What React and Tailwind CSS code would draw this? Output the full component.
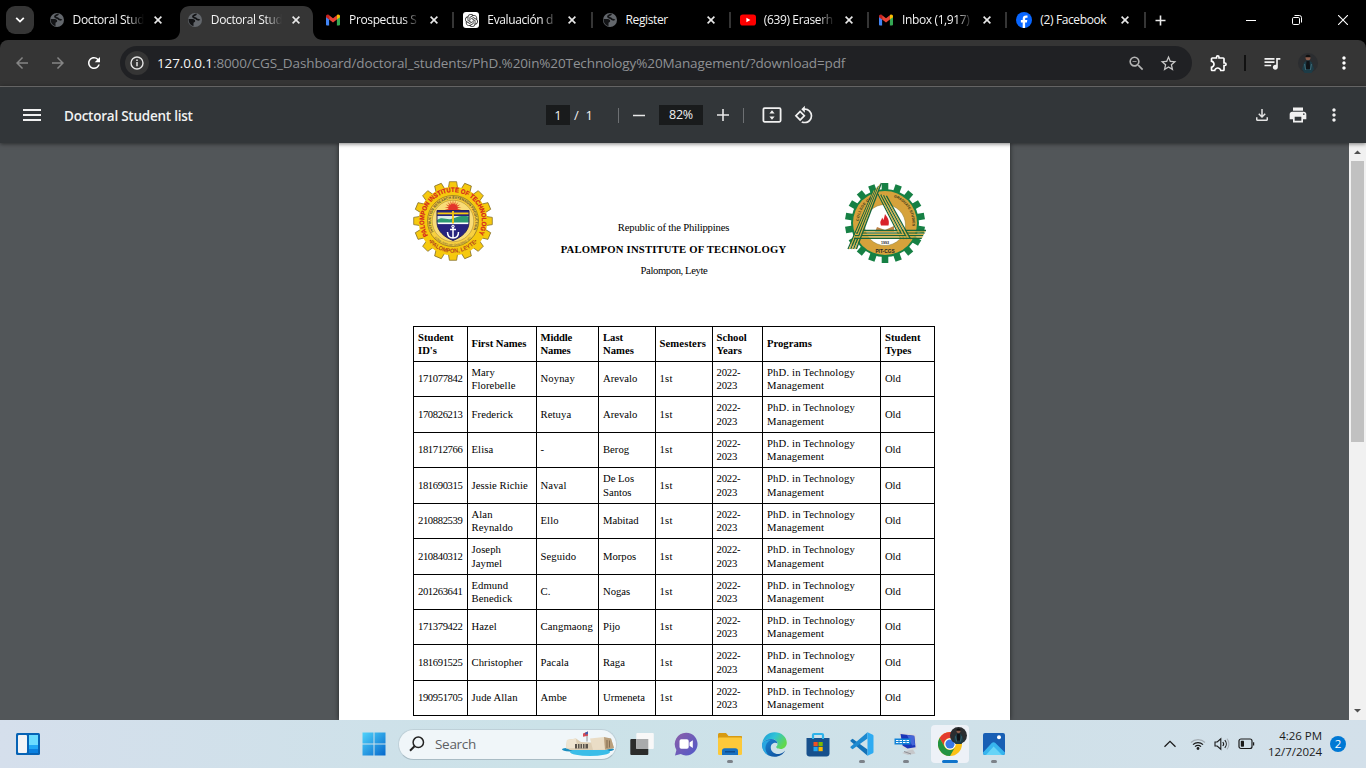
import React from "react";
import {
  MdRefresh,
  MdArrowBack,
  MdArrowForward,
  MdStarBorder,
  MdOutlineZoomOut,
  MdOutlineExtension,
  MdQueueMusic,
  MdMoreVert,
  MdOutlineFileDownload,
  MdPrint,
  MdRotate90DegreesCcw,
  MdMenu,
} from "react-icons/md";
import { SiOpenai } from "react-icons/si";

/* ---------- tab icons ---------- */

function Globe() {
  return (
    <svg width="16" height="16" viewBox="0 0 16 16">
      <circle cx="8" cy="8" r="7" fill="#63676c" />
      <path d="M9 1.800C9 3.200 6.200 3 6 4.500 5.800 6 9 5.700 9.500 7c.3.900 2.700.3 3 1.300" fill="none" stroke="#131416" strokeWidth="1.900" />
      <path d="M1.600 7h4c1.800 0 2.600 1 2.600 2.200 0 1-1.700.8-1.700 2V14C3.500 13.600 1.500 10.500 1.600 7z" fill="#131416" />
    </svg>
  );
}

function Gmail() {
  return (
    <svg width="16" height="16" viewBox="0 0 16 16">
      <path d="M1 4v8.600c0 .5.4.9.9.9h2.200V7z" fill="#4285f4" />
      <path d="M15 4v8.600c0 .5-.4.9-.9.9h-2.200V7z" fill="#34a853" />
      <path d="M4.100 3.300 8 6.300l3.900-3v4.200L8 10.500 4.100 7.500z" fill="#ea4335" />
      <path d="M1 4.300C1 2.800 2.700 2 3.900 3l.2.200v4.300L1 5.200z" fill="#c5221f" />
      <path d="M15 4.300C15 2.800 13.300 2 12.100 3l-.2.200v4.300L15 5.200z" fill="#fbbc04" />
    </svg>
  );
}

function ChatGpt() {
  return (
    <span className="flex size-4 items-center justify-center rounded-[3px] bg-white">
      <SiOpenai size={13} color="#333" />
    </span>
  );
}

function YouTube() {
  return (
    <svg width="16" height="16" viewBox="0 0 16 16">
      <rect x="0" y="2.500" width="16" height="11" rx="2.800" fill="#f00" />
      <path d="M6.400 5.700v4.600l4-2.300z" fill="#fff" />
    </svg>
  );
}

function Facebook() {
  return (
    <svg width="16" height="16" viewBox="0 0 16 16">
      <circle cx="8" cy="8" r="8" fill="#0866ff" />
      <path d="M6.700 16v-5.400H4.900V8h1.800V6.900c0-2.400 1.100-3.500 3.400-3.500.4 0 1.100.1 1.400.2v2.200h-.9c-1.100 0-1.500.4-1.500 1.500V8h2.200l-.4 2.600H9.100V16z" fill="#fff" />
    </svg>
  );
}

function CloseX() {
  return (
    <svg width="8" height="8" viewBox="0 0 8 8">
      <path d="M.6.6l6.800 6.800M7.400.6L.6 7.400" stroke="#e8e8e8" strokeWidth="1.600" />
    </svg>
  );
}

const fade = "[mask-image:linear-gradient(to_right,black_76%,transparent_100%)]";

const tabs = [
  { title: "Doctoral Stud", icon: Globe, long: true },
  { title: "Doctoral Stud", icon: Globe, long: true, active: true },
  { title: "Prospectus S", icon: Gmail, long: true, sep: true },
  { title: "Evaluación d", icon: ChatGpt, long: true, sep: true },
  { title: "Register", icon: Globe, sep: true },
  { title: "(639) Eraserh", icon: YouTube, long: true, sep: true },
  { title: "Inbox (1,917)", icon: Gmail, long: true, sep: true },
  { title: "(2) Facebook", icon: Facebook, sep: true },
];

function Tab({ title, icon: Icon, active, sep, long }) {
  return (
    <div className="relative flex h-10 w-[138.250px] shrink-0 items-center pl-[10px]">
      {active && (
        <svg className="absolute -left-[8px] top-[6px]" width="154" height="34" viewBox="0 0 154 34">
          <path d="M0 34c7 0 11-4 11-10V10C11 4 15 0 21 0h113c6 0 10 4 10 10v14c0 6 4 10 10 10z" fill="#353535" />
        </svg>
      )}
      <div className="relative flex w-full items-center">
        <span className="flex size-4 shrink-0 items-center justify-center">
          <Icon />
        </span>
        <span
          className={
            "ml-[8px] w-[71px] shrink-0 overflow-hidden whitespace-nowrap text-[12px] leading-4 tracking-[-0.380px] text-[#f4f4f4] " +
            (long ? fade : "")
          }
        >
          {title}
        </span>
        <span className="ml-[10px] flex">
          <CloseX />
        </span>
        {sep && <span className="absolute -right-px top-0 h-4 w-[2px] bg-[#353535]" />}
      </div>
    </div>
  );
}

function TabStrip() {
  return (
    <div className="flex h-10 shrink-0 items-center bg-black pl-[6px]">
      <div className="mr-[4.600px] flex size-7 items-center justify-center rounded-[9px] bg-[#353535]">
        <svg width="10" height="6" viewBox="0 0 10 6">
          <path d="M1.200.8 5 4.600 8.800.8" fill="none" stroke="#fff" strokeWidth="1.800" />
        </svg>
      </div>
      {tabs.map((t, i) => (
        <Tab key={i} {...t} />
      ))}
      <svg className="ml-[10.600px]" width="11" height="11" viewBox="0 0 11 11">
        <path d="M5.500.5v10M.5 5.500h10" stroke="#e8e8e8" strokeWidth="1.600" />
      </svg>
      <div className="ml-auto flex items-center pr-[18px]">
        <svg width="10" height="10" viewBox="0 0 10 10">
          <path d="M0 5.500h10" stroke="#fff" />
        </svg>
        <svg className="ml-[36px]" width="10" height="10" viewBox="0 0 10 10" fill="none" stroke="#fff">
          <rect x=".5" y="2.500" width="7" height="7" rx="1.200" />
          <path d="M2.500.5h4.800a2.200 2.200 0 0 1 2.200 2.200v4.800" />
        </svg>
        <svg className="ml-[36px]" width="10" height="10" viewBox="0 0 10 10">
          <path d="M0 0l10 10M10 0L0 10" stroke="#fff" strokeWidth="1.100" />
        </svg>
      </div>
    </div>
  );
}

function Avatar({ size }) {
  return (
    <svg width={size} height={size} viewBox="0 0 20 20">
      <circle cx="10" cy="10" r="10" fill="#2b2d30" />
      <path d="M6.500 20 4 16l2-6.500 3-2h2l3 2 2 6.500-2.500 4z" fill="#1d3c47" />
      <path d="M8.500 8h3l.8 8h-4.600z" fill="#101317" />
      <path d="M6.500 11l1.200 6M13.500 11l-1.200 6" stroke="#3b6875" strokeWidth="1.100" />
      <circle cx="10" cy="4.800" r="2.500" fill="#8c5d4c" />
      <path d="M7.400 4.300C7 1 13 1 12.600 4.300z" fill="#101010" />
    </svg>
  );
}

function AddressRow() {
  return (
    <div className="flex h-[46px] shrink-0 bg-black">
      <div className="flex h-full w-full items-center rounded-t-[8px] bg-[#353535] pl-[13px]">
        <MdArrowBack size={18} color="#858585" />
        <MdArrowForward className="ml-[18px]" size={18} color="#858585" />
        <MdRefresh className="ml-[18px]" size={18} color="#fff" />
        <div className="ml-[17px] flex h-[34px] w-[1072px] items-center rounded-full bg-[#202124] pl-[5px] pr-[14px]">
          <span className="flex size-6 items-center justify-center rounded-full bg-[#353535]">
            <svg width="14" height="14" viewBox="0 0 14 14">
              <circle cx="7" cy="7" r="6" fill="none" stroke="#e3e3e3" strokeWidth="1.400" />
              <path d="M7 6v4.200M7 3.600v1.500" stroke="#e3e3e3" strokeWidth="1.500" />
            </svg>
          </span>
          <span className="ml-[8px] whitespace-nowrap text-[13.500px] tracking-[-0.112px] text-[#8f9194]">
            <span className="text-[#f5f5f5]">127.0.0.1</span>
            :8000/CGS_Dashboard/doctoral_students/PhD.%20in%20Technology%20Management/?download=pdf
          </span>
          <MdOutlineZoomOut className="ml-auto" size={19} color="#b5b5b5" />
          <MdStarBorder className="ml-[13px]" size={19} color="#c7c7c7" />
        </div>
        <MdOutlineExtension className="ml-[17px]" size={20} color="#fff" />
        <span className="ml-[15px] h-4 w-[2px] bg-[#111]" />
        <MdQueueMusic className="ml-[16px]" size={20} color="#f1f1f1" />
        <span className="ml-[16px]">
          <Avatar size={20} />
        </span>
        <MdMoreVert className="ml-[16px]" size={20} color="#fff" />
      </div>
    </div>
  );
}

function PdfToolbar() {
  return (
    <div className="relative z-10 flex h-[57px] shrink-0 items-center border-t border-[#646464] bg-[#323639] pl-5 text-[#f1f1f1] shadow-[0_1px_4px_rgba(0,0,0,0.5)]">
      <MdMenu size={24} color="#f1f1f1" />
      <span className="ml-5 w-[482px] whitespace-nowrap pt-[2px] text-[13.500px] font-semibold tracking-[-0.240px]">
        Doctoral Student list
      </span>
      <span className="flex h-5 w-6 items-center justify-center bg-[#191b1c] pt-px text-[13px]">1</span>
      <span className="ml-1 w-5 whitespace-pre pt-px text-[13px]">/  1</span>
      <span className="ml-[24px] h-[15px] w-px bg-[#6d7073]" />
      <svg className="ml-[14px]" width="12" height="13" viewBox="0 0 12 13">
        <path d="M0 6.500h12" stroke="#e8e8e8" strokeWidth="1.500" />
      </svg>
      <span className="ml-[14px] flex h-5 w-[44px] items-center justify-center bg-[#191b1c] pt-px text-[12.500px] tracking-[-0.250px]">82%</span>
      <svg className="ml-[14px]" width="12" height="12" viewBox="0 0 12 12">
        <path d="M0 6h12M6 0v12" stroke="#e8e8e8" strokeWidth="1.600" />
      </svg>
      <span className="ml-[14px] h-[15px] w-px bg-[#6d7073]" />
      <svg className="ml-[18px]" width="20" height="16" viewBox="0 0 20 16">
        <rect x="1.400" y="1.200" width="17.200" height="13.600" rx="1.200" fill="none" stroke="#f1f1f1" strokeWidth="1.800" />
        <path d="M10 3.200 12.600 6.400H7.400zM10 12.800 7.400 9.600h5.200z" fill="#f1f1f1" />
      </svg>
      <MdRotate90DegreesCcw className="ml-[12px]" size={20} color="#f1f1f1" />
      <div className="ml-auto flex items-center pr-[22px]">
        <MdOutlineFileDownload size={18} color="#e4e4e4" />
        <MdPrint className="ml-[17px]" size={20} color="#f1f1f1" />
        <MdMoreVert className="ml-[16px]" size={20} color="#f1f1f1" />
      </div>
    </div>
  );
}

/* ---------- document ---------- */

const spokes = (n) => Array.from({ length: n }, (_, i) => (360 / n) * i);

function InstituteSeal() {
  return (
    <svg width="80" height="80" viewBox="-40 -40 80 80">
      <defs>
        <path id="seal-top" d="M-25 14.500A28.900 28.900 0 1 1 25 14.500" />
        <path id="seal-bottom" d="M-27 17A32 32 0 0 0 27 17" />
        <path id="seal-inner" d="M-19 11.500A22.200 22.200 0 1 1 19 11.500" />
        <path id="seal-inner-low" d="M-19 16A24.800 24.800 0 0 0 19 16" />
        <clipPath id="shield">
          <path d="M-16-10.500H16V1C16 10 9 16 0 19.500-9 16-16 10-16 1z" />
        </clipPath>
      </defs>
      {spokes(16).map((a) => (
        <path key={a} transform={`rotate(${a})`} d="M-4.800-32-3.600-39.300H3.600L4.800-32z" fill="#f6c90e" stroke="#7a6420" strokeWidth=".7" />
      ))}
      <circle r="34.300" fill="#f6c90e" />
      <circle r="25.500" fill="#f7d040" stroke="#6e5a28" strokeWidth=".6" />
      <circle r="20.800" fill="#f9dc77" stroke="#8a6a20" strokeWidth=".4" />
      {spokes(18).map((a) => (
        <path key={a} transform={`translate(0 -12.500) rotate(${a})`} d="M-.8-4 0-8.500 .8-4z" fill="#e4542c" />
      ))}
      <circle cy="-12.500" r="4.600" fill="#e3342b" />
      <g clipPath="url(#shield)">
        <rect x="-16" y="-11" width="32" height="31" fill="#28247e" />
        <rect x="-16" y="-8.500" width="32" height="1.800" fill="#f6c90e" />
        <rect x="-16" y="-5" width="32" height="7" fill="#dcebe8" />
        <path d="M-16-1C-11-5-7-1-2-2S5-6 16-4.500V2H-16z" fill="#2c9a72" />
        <rect x="-16" y="1.500" width="32" height="1.600" fill="#fff" />
        <rect x="-.9" y="-10.500" width="1.800" height="13" fill="#f6c90e" />
      </g>
      <path d="M-16-10.500H16V1C16 10 9 16 0 19.500-9 16-16 10-16 1z" fill="none" stroke="#27215c" />
      <path d="M0 5.500v11.500M-3 8.500h6M-5.500 11c0 4.500 2.500 6 5.500 6s5.500-1.500 5.500-6" fill="none" stroke="#fff" strokeWidth="1.500" />
      <circle cy="5.500" r="1.300" fill="none" stroke="#fff" />
      <text fill="#d5261e" stroke="#d5261e" strokeWidth=".2" fontFamily="Liberation Sans Narrow, Liberation Sans" fontWeight="700" fontSize="6.600">
        <textPath href="#seal-top" textLength="119" lengthAdjust="spacingAndGlyphs">PALOMPON INSTITUTE OF TECHNOLOGY</textPath>
      </text>
      <text fill="#b4471c" fontFamily="Liberation Sans" fontWeight="700" fontSize="6">
        <textPath href="#seal-bottom" startOffset="4" textLength="56" lengthAdjust="spacingAndGlyphs">•PALOMPON, LEYTE•</textPath>
      </text>
      <text fill="#5d4b2b" fontFamily="Liberation Sans" fontWeight="700" fontSize="3.600">
        <textPath href="#seal-inner" textLength="89" startOffset="1" lengthAdjust="spacingAndGlyphs">INSTRUCTION RESEARCH EXTENSION PRODUCTION</textPath>
      </text>
      <text fill="#5d4b2b" fontFamily="Liberation Sans" fontSize="2.800">
        <textPath href="#seal-inner-low" startOffset="1" textLength="41" lengthAdjust="spacingAndGlyphs">ESTABLISHED 1964 CHARTERED 1972</textPath>
      </text>
    </svg>
  );
}

function GraduateSeal() {
  return (
    <svg width="84" height="84" viewBox="-42 -42 84 84">
      <defs>
        <path id="cgs-left" d="M-26 2A26 26 0 0 1-3-27" />
        <path id="cgs-right" d="M5-27A27.500 27.500 0 0 1 27 5" />
      </defs>
      {spokes(18).map((a) => (
        <rect key={a} transform={`rotate(${a})`} x="-3.300" y="-40" width="6.600" height="9" fill="#168044" />
      ))}
      <circle r="34" fill="#168044" />
      <circle r="32" fill="#d6a23b" />
      <circle cy="2" r="20.500" fill="#fff" stroke="#8a7a30" strokeWidth=".5" />
      <path d="M-8 4 0 7 9 3V9H-10z" fill="#bf8347" />
      <path d="M-4 2.500c-2-5 1-5 1-8 1 1 1 2 1.500 2.500C-1-5-.5-6.500 0-9c2 3 5 6 3.500 11.500z" fill="#d8212a" />
      <g fill="none" strokeWidth="1.300">
        {[0, 1, 2, 3, 4, 5, 6].map((i) => (
          <g key={i} stroke={i % 2 ? "#d9b148" : "#17653b"}>
            <path d={`M${-37 + i * 1.400} 26L${-12 + i * 1.400} ${-31 - i * 1.500}`} />
            <path d={`M${-7 + i * 1.400} ${-29 + i * 0.3}L${16 + i * 1.600} 16`} />
            <path d={`M${-28 - i * 0.5} ${7.500 + i * 1.300}H${41 - i * 0.7}`} />
          </g>
        ))}
      </g>
      <text y="21" fill="#222" fontFamily="Liberation Sans" fontWeight="700" fontSize="3.600" textAnchor="middle">1993</text>
      <text y="30" fill="#222" fontFamily="Liberation Sans" fontWeight="700" fontSize="4.800" textAnchor="middle">PIT-CGS</text>
      <g fill="#2c3018" fontFamily="Liberation Sans" fontWeight="700" fontSize="3.600">
        <text><textPath href="#cgs-left" startOffset="4" textLength="26">COLLEGE OF</textPath></text>
        <text><textPath href="#cgs-right" startOffset="4" textLength="37" lengthAdjust="spacingAndGlyphs">GRADUATE STUDIES</textPath></text>
      </g>
    </svg>
  );
}

const head = ["Student\nID's", "First Names", "Middle\nNames", "Last\nNames", "Semesters", "School\nYears", "Programs", "Student\nTypes"];

const students = [
  ["171077842", "Mary\nFlorebelle", "Noynay", "Arevalo"],
  ["170826213", "Frederick", "Retuya", "Arevalo"],
  ["181712766", "Elisa", "-", "Berog"],
  ["181690315", "Jessie Richie", "Naval", "De Los\nSantos"],
  ["210882539", "Alan\nReynaldo", "Ello", "Mabitad"],
  ["210840312", "Joseph\nJaymel", "Seguido", "Morpos"],
  ["201263641", "Edmund\nBenedick", "C.", "Nogas"],
  ["171379422", "Hazel", "Cangmaong", "Pijo"],
  ["181691525", "Christopher", "Pacala", "Raga"],
  ["190951705", "Jude Allan", "Ambe", "Urmeneta"],
];

const bodyCell = [
  "pl-[4px] tracking-[-0.400px]",
  "pl-[3.500px] tracking-[0.080px]",
  "pl-[3.500px] tracking-[0.100px]",
  "pl-[4px]",
  "pl-[3.500px] tracking-[0.200px]",
  "pl-[3.500px] tracking-[-0.200px]",
  "pl-[4px] tracking-[0.150px]",
  "pl-[4px] tracking-[-0.100px]",
];

const headCell = [
  "pl-[4px]",
  "pl-[3.500px] tracking-[-0.050px]",
  "pl-[3.500px] tracking-[-0.180px]",
  "pl-[4px]",
  "pl-[3.500px] tracking-[0.100px]",
  "pl-[3.500px]",
  "pl-[4px]",
  "pl-[4px]",
];

function Row({ cells, header }) {
  const styles = header ? headCell : bodyCell;
  return (
    <div className={"grid grid-cols-[54px_69px_62px_57px_57px_50px_118px_54px] border-b border-black " + (header ? "font-bold" : "")}>
      {cells.map((c, i) => (
        <div key={i} className={"flex items-center whitespace-pre border-r border-black " + styles[i]}>
          {c}
        </div>
      ))}
    </div>
  );
}

function Page() {
  return (
    <div className="h-[577px] w-[671px] shrink-0 overflow-hidden bg-white px-[74px] pt-[38px] font-['Liberation_Serif',serif] text-[10.670px] text-black shadow-[0_0_5px_rgba(0,0,0,0.6)]">
      <div className="flex h-[145px] justify-between">
        <InstituteSeal />
        <div className="ml-[13px] mr-[2px] pt-[36px] text-center leading-[21.500px]">
          <p className="tracking-[-0.180px]">Republic of the Philippines</p>
          <p className="font-bold tracking-[0.200px]">PALOMPON INSTITUTE OF TECHNOLOGY</p>
          <p className="pl-px tracking-[-0.400px]">Palompon, Leyte</p>
        </div>
        <div className="mr-[9px]">
          <GraduateSeal />
        </div>
      </div>
      <div className="grid w-[522px] grid-rows-[35px_35px_36px_35px_36px_35px_36px_35px_35px_36px_35px] border-l border-t border-black leading-[13.300px]">
        <Row cells={head} header />
        {students.map((s) => (
          <Row key={s[0]} cells={[...s, "1st", "2022-\n2023", "PhD. in Technology\nManagement", "Old"]} />
        ))}
      </div>
    </div>
  );
}

function Viewer() {
  return (
    <div className="flex h-[577px] shrink-0 bg-[#525659]">
      <div className="flex flex-1 justify-center">
        <Page />
      </div>
      <div className="flex w-[17px] flex-col items-center bg-[#f1f1f1]">
        <svg width="17" height="18" viewBox="0 0 17 18">
          <path d="M5 11h7L8.500 7.500z" fill="#505050" />
        </svg>
        <div className="h-[281px] w-[13px] bg-[#c1c1c1]" />
        <svg className="mt-auto" width="17" height="17" viewBox="0 0 17 17">
          <path d="M5 6h7L8.500 9.500z" fill="#505050" />
        </svg>
      </div>
    </div>
  );
}

/* ---------- taskbar ---------- */

function Widgets() {
  return (
    <svg width="24" height="22" viewBox="0 0 24 22">
      <rect width="24" height="22" rx="1.500" fill="#0763b5" />
      <rect x="2" y="2" width="9" height="18" rx="1" fill="#f4f4f6" />
      <rect x="13" y="2" width="9" height="10" fill="#6adcff" />
      <rect x="13" y="12" width="9" height="4" fill="#20a8f5" />
      <rect x="13" y="16" width="9" height="4" fill="#0a80e0" />
    </svg>
  );
}

function WindowsLogo() {
  return (
    <svg width="24" height="24" viewBox="0 0 24 24">
      <defs>
        <linearGradient id="win" x1="0" y1="0" x2="1" y2="1">
          <stop offset="0" stopColor="#50d3fb" />
          <stop offset="1" stopColor="#0568cc" />
        </linearGradient>
      </defs>
      <path d="M.5.5h11v11H.5zM12.500.5h11v11h-11zM.5 12.500h11v11H.5zM12.500 12.500h11v11h-11z" fill="url(#win)" />
    </svg>
  );
}

function Memorial() {
  return (
    <svg width="54" height="28" viewBox="0 0 54 28">
      <ellipse cx="27" cy="19.500" rx="26" ry="3" fill="#1b8fc0" />
      <ellipse cx="29" cy="22" rx="20" ry="4" fill="#3bbde8" />
      <path d="M6 10 15 8.500l5 3.500 10 .5L36 8l14 .5 3 9.500-9 2H9l-4-2z" fill="#ddceb4" />
      <path d="M6 10l9-1.500 1 9.500-11 .5z" fill="#efe4d0" />
      <path d="M29 8.500 43 7l1 12.500-12 .5z" fill="#eaddc6" />
      <path d="M43 7l7 1.500 3 9.500-9 1.500z" fill="#b99f7c" />
      <path d="M14 14h13v4.500H14z" fill="#5a534b" />
      <path d="M16.500 14v4.500M19 14v4.500M21.500 14v4.500M24 14v4.500" stroke="#e8dcc5" strokeWidth=".9" />
      <path d="M46 10v8M48.500 10.500v7" stroke="#7e684c" strokeWidth=".9" />
      <path d="M26 11.500V2.500" stroke="#777" strokeWidth=".8" />
      <path d="M22 3.500 27 1.500v4.300l-5 1z" fill="#d74b55" />
      <path d="M24.300 2.500 27 1.500V4l-2.700.7z" fill="#3f5dae" />
    </svg>
  );
}

function TaskView() {
  return (
    <svg width="24" height="24" viewBox="0 0 24 24">
      <rect x=".3" y="7" width="18" height="16" rx="1" fill="#2b2c2b" />
      <rect x="6.300" y="1" width="17.500" height="16" rx="1" fill="#f8f8f8" />
      <path d="M6.300 7h12v10h-12z" fill="#a9abac" />
    </svg>
  );
}

function Chat() {
  return (
    <svg width="24" height="24" viewBox="0 0 24 24">
      <defs>
        <linearGradient id="chat" x1="0" y1="0" x2="1" y2="1">
          <stop offset="0" stopColor="#8c5fa8" />
          <stop offset="1" stopColor="#5059c9" />
        </linearGradient>
      </defs>
      <path d="M12 .8A11.300 11.300 0 1 1 6.800 22L1 23.500l1.400-5.600A11.300 11.300 0 0 1 12 .8z" fill="url(#chat)" />
      <rect x="5.500" y="7.300" width="9.200" height="9.500" rx="1.800" fill="#fff" />
      <path d="M15.500 10.500l3.300-2.300v7.800l-3.300-2.300z" fill="#fff" />
    </svg>
  );
}

function Explorer() {
  return (
    <svg width="26" height="24" viewBox="0 0 26 24">
      <path d="M1 2.500C1 1.700 1.700 1 2.500 1H9l2.500 3H24c.6 0 1 .4 1 1v4H1z" fill="#d79a12" />
      <rect x="1" y="5.500" width="24" height="17.500" rx="1.200" fill="#fcc93a" />
      <path d="M5 23v-4c0-1.700 1-2.700 2.700-2.700h10.600c1.700 0 2.700 1 2.700 2.700v4z" fill="#1670c0" />
      <path d="M8 19h10v1.500H8z" fill="#0c4d8f" />
    </svg>
  );
}

function Edge() {
  return (
    <svg width="25" height="25" viewBox="0 0 24 24">
      <defs>
        <linearGradient id="edgeTop" x1="0" y1="0" x2="1" y2=".5">
          <stop offset="0" stopColor="#1b96d6" />
          <stop offset=".5" stopColor="#2fc3d8" />
          <stop offset="1" stopColor="#61d84e" />
        </linearGradient>
        <linearGradient id="edgeLow" x1="0" y1="0" x2="1" y2="1">
          <stop offset="0" stopColor="#1a86d5" />
          <stop offset="1" stopColor="#0d4a96" />
        </linearGradient>
      </defs>
      <path d="M.2 11C1 4.500 6 .2 12 .2c7 0 11.800 4.800 11.800 10 0 3.400-2.600 6-6 6-3.300 0-4.200-1.200-4.200-1.800 0-.7 1.300-1.100 1.300-3 0-2.800-2.600-4.600-6-4.600C5 6.800 1.500 8.500.2 11z" fill="url(#edgeTop)" />
      <path d="M.2 11C1.700 8.300 5 6.700 8.900 6.800 12 6.900 14.500 8.500 14.900 11c-2-1.500-6.500-.5-6.500 4 0 3.800 4 6.500 8 6 2.500-.3 4.500-1.700 5.800-3.200C20.500 21.500 16.800 23.800 12 23.800 4.500 23.800-.5 17.500.2 11z" fill="url(#edgeLow)" />
      <path d="M.2 11c1.500-2.500 5-3.500 8-3-3.500 1.500-5.500 5-4.700 9 .5 2.500 2 5 4.500 6C2.500 21.500-.5 16.500.2 11z" fill="#2aa6e0" />
    </svg>
  );
}

function Store() {
  return (
    <svg width="24" height="25" viewBox="0 0 24 25">
      <path d="M.5 6h23v15.500c0 1.700-1.300 3-3 3h-17c-1.700 0-3-1.300-3-3z" fill="#17508c" />
      <path d="M7 7V3c0-.6.4-1 1-1h8c.6 0 1 .4 1 1v4" fill="none" stroke="#2fb3ea" strokeWidth="2.200" />
      <path d="M7.500 10h4.200v4.200H7.500z" fill="#f25022" />
      <path d="M12.500 10h4.200v4.200h-4.200z" fill="#7fba00" />
      <path d="M7.500 15h4.200v4.200H7.500z" fill="#22a6f2" />
      <path d="M12.500 15h4.200v4.200h-4.200z" fill="#ffb900" />
    </svg>
  );
}

function VsCode() {
  return (
    <svg width="24" height="24" viewBox="0 0 24 24">
      <path d="M.5 8.300 2.600 6.700 17.500 17.600v6.100L.5 9.200z" fill="#1272b8" />
      <path d="M.5 15.700 2.600 17.300 17.500 6.400V.3L.5 14.800z" fill="#1d8ad0" />
      <path d="M17.500.3l5.300 2.500c.5.300.7.700.7 1.200v16c0 .5-.2 1-.7 1.200l-5.300 2.500z" fill="#2eabf2" />
    </svg>
  );
}

function RemotePc() {
  return (
    <svg width="24" height="24" viewBox="0 0 24 24">
      <path d="M5 .5 21.500 2.500 23 17l-9.500 1.500L8 15z" fill="#d7d9dc" />
      <path d="M6.500 2 20.300 3.700l1.200 11.500-8 1.300L8.500 13.500z" fill="#1b36b8" />
      <path d="M13 3l7 1 1 9-3 .5z" fill="#4566d8" />
      <path d="M14 18.500l5-1 2.500 4L14 23l-6-2z" fill="#c6c8cb" />
      <path d="M10 19.500l7 2.500" stroke="#8d9095" />
      <rect x=".5" y="6.500" width="16" height="6" fill="#1283d8" />
      <path d="M2 8.500h13M2 10.500h13" stroke="#fff" strokeWidth="1.100" strokeDasharray="2.500 1" />
    </svg>
  );
}

function Chrome() {
  return (
    <svg width="24" height="24" viewBox="0 0 24 24">
      <circle cx="12" cy="12" r="12" fill="#fbc116" />
      <path d="M12 0a12 12 0 0 1 10.400 6H12a6 6 0 0 0-5.200 9L1.600 6A12 12 0 0 1 12 0z" fill="#e33b2e" />
      <path d="M1.600 6l5.200 9A6 6 0 0 0 17.200 15L12 24A12 12 0 0 1 1.600 6z" fill="#229342" />
      <circle cx="12" cy="12" r="5.800" fill="#fff" />
      <circle cx="12" cy="12" r="4.600" fill="#3a79e6" />
    </svg>
  );
}

function Photos() {
  return (
    <svg width="24" height="24" viewBox="0 0 24 24">
      <rect x="1" y="1" width="22" height="22" rx="2" fill="#185fb4" />
      <path d="M1 20.500 10 10.800c.9-.9 2.200-.9 3.100 0L23 20.500V21c0 1.200-.8 2-2 2H3c-1.200 0-2-.8-2-2z" fill="#38b5ee" />
      <path d="M4 23 11.600 14.600 20 23z" fill="#66d4f7" />
      <circle cx="17" cy="5.300" r="2" fill="#fff" />
    </svg>
  );
}

const apps = [
  { icon: TaskView },
  { icon: Chat },
  { icon: Explorer, open: true },
  { icon: Edge },
  { icon: Store },
  { icon: VsCode, open: true },
  { icon: RemotePc, open: true },
  { icon: Chrome, active: true },
  { icon: Photos, open: true },
];

function TaskApp({ icon: Icon, open, active }) {
  return (
    <div className="relative flex h-12 w-11 items-center justify-center">
      {active && <span className="absolute left-[3px] top-[5px] h-[38px] w-[38px] rounded-[4px] bg-[#edf1f7]" />}
      <span className="relative flex">
        <Icon />
      </span>
      {active && (
        <span className="absolute left-[22px] top-[7px]">
          <Avatar size={17} />
        </span>
      )}
      {active && <span className="absolute bottom-[5px] left-[14px] h-[3px] w-4 rounded-full bg-[#0f74cb]" />}
      {open && <span className="absolute bottom-[5px] left-[19px] h-[3px] w-[6px] rounded-full bg-[#7c8289]" />}
    </div>
  );
}

function Taskbar() {
  return (
    <div className="flex h-12 shrink-0 items-center bg-linear-to-r from-[#d5dfec] from-0% via-[#cbe2e8] via-40% to-[#d3e0ea] to-100% pl-4 text-[#1b1b1b]">
      <Widgets />
      <div className="ml-[322px]">
        <WindowsLogo />
      </div>
      <div className="ml-[12px] flex h-[31px] w-[219px] items-center rounded-full border border-[#bed0d8] border-b-[#a9bcc5] bg-[#f0f6f9] pl-[10px] pr-px">
        <svg width="16" height="16" viewBox="0 0 16 16">
          <circle cx="9.300" cy="6.300" r="5.200" fill="none" stroke="#222" strokeWidth="1.500" />
          <path d="M5.500 10.200 1 14.700" stroke="#222" strokeWidth="2" />
        </svg>
        <span className="ml-[10px] text-[13.500px] tracking-[-0.300px] text-[#5d6063]">Search</span>
        <span className="ml-auto">
          <Memorial />
        </span>
      </div>
      <div className="ml-[3px] flex">
        {apps.map((a, i) => (
          <TaskApp key={i} {...a} />
        ))}
      </div>
      <div className="ml-auto flex items-center pr-[20px]">
        <svg width="12" height="8" viewBox="0 0 12 8">
          <path d="M.5 6.800 6 1.300l5.500 5.500" fill="none" stroke="#1b1b1b" strokeWidth="1.300" />
        </svg>
        <svg className="ml-[14px]" width="16" height="14" viewBox="0 0 16 14" fill="none" strokeWidth="1.200">
          <path d="M1 5.500a10 10 0 0 1 14 0" stroke="#a4acb3" />
          <path d="M3 7.700a7 7 0 0 1 10 0M5 9.700a4.200 4.200 0 0 1 6 0" stroke="#1b1b1b" />
          <circle cx="8" cy="11.500" r="1.400" fill="#1b1b1b" />
        </svg>
        <svg className="ml-[8px]" width="16" height="14" viewBox="0 0 16 14" fill="none" stroke="#1b1b1b" strokeWidth="1.100">
          <path d="M1 5h2.200L6.800 1.800v10.400L3.200 9H1z" />
          <path d="M8.800 5a3 3 0 0 1 0 4M10.800 3.200a5.600 5.600 0 0 1 0 7.600" />
          <path d="M12.900 1.700a8 8 0 0 1 0 10.600" stroke="#a9b1b8" />
        </svg>
        <svg className="ml-[8px]" width="17" height="12" viewBox="0 0 17 12">
          <rect x="1" y="1" width="13" height="9.500" rx="2" fill="none" stroke="#1b1b1b" strokeWidth="1.200" />
          <rect x="2.800" y="2.800" width="3.200" height="6" rx=".7" fill="#1b1b1b" />
          <path d="M15 4.200h1.200v3.200H15z" fill="#1b1b1b" />
        </svg>
        <div className="ml-[7px] w-[60px] whitespace-nowrap text-right text-[11.500px] leading-4 tracking-[-0.050px]">
          <p>4:26 PM</p>
          <p>12/7/2024</p>
        </div>
        <span className="ml-[8px] flex size-4 items-center justify-center rounded-full bg-[#0078d4] text-[11.500px] text-white">2</span>
      </div>
    </div>
  );
}

export default function App() {
  return (
    <div className="flex h-[768px] w-[1366px] flex-col overflow-hidden font-['Open_Sans','Noto_Sans',sans-serif]">
      <TabStrip />
      <AddressRow />
      <PdfToolbar />
      <Viewer />
      <Taskbar />
    </div>
  );
}
